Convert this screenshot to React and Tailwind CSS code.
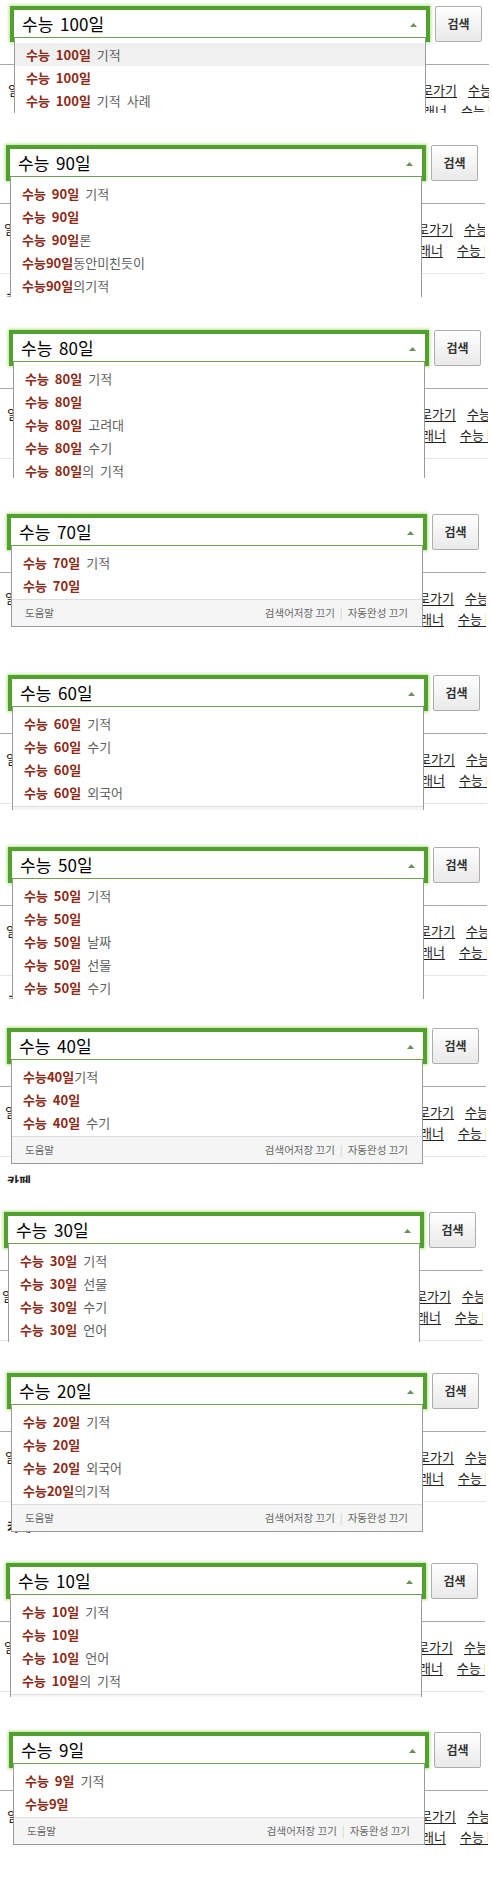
import React from "react";

const panels = [
  {
    q: "100", h: "h-[113px]", w: "w-[489px]", mt: "mt-0", pl: "pl-[10px]", dl: "left-[14px]", hl: 0,
    items: [["수능 100일", "기적", true], ["수능 100일", "", false], ["수능 100일", "기적 사례", true]],
  },
  {
    q: "90", h: "h-[158px]", w: "w-[485px]", mt: "mt-[26px]", pl: "pl-[6px]", dl: "left-[10px]", hl: -1,
    items: [["수능 90일", "기적", true], ["수능 90일", "", false], ["수능 90일", "론", false], ["수능90일", "동안미친듯이", false], ["수능90일", "의기적", false]],
  },
  {
    q: "80", h: "h-[154px]", w: "w-[488px]", mt: "mt-[27px]", pl: "pl-[9px]", dl: "left-[13px]", hl: -1,
    items: [["수능 80일", "기적", true], ["수능 80일", "", false], ["수능 80일", "고려대", true], ["수능 80일", "수기", true], ["수능 80일", "의 기적", false]],
  },
  {
    q: "70", h: "h-[124px]", w: "w-[486px]", mt: "mt-[30px]", pl: "pl-[7px]", dl: "left-[11px]", hl: -1,
    items: [["수능 70일", "기적", true], ["수능 70일", "", false]],
  },
  {
    q: "60", h: "h-[141px]", w: "w-[487px]", mt: "mt-[37px]", pl: "pl-[8px]", dl: "left-[12px]", hl: -1,
    items: [["수능 60일", "기적", true], ["수능 60일", "수기", true], ["수능 60일", "", false], ["수능 60일", "외국어", true]],
  },
  {
    q: "50", h: "h-[158px]", w: "w-[487px]", mt: "mt-[31px]", pl: "pl-[8px]", dl: "left-[12px]", hl: -1,
    items: [["수능 50일", "기적", true], ["수능 50일", "", false], ["수능 50일", "날짜", true], ["수능 50일", "선물", true], ["수능 50일", "수기", true]],
  },
  {
    q: "40", h: "h-[161px]", w: "w-[486px]", mt: "mt-[23px]", pl: "pl-[7px]", dl: "left-[11px]", hl: -1,
    items: [["수능40일", "기적", false], ["수능 40일", "", false], ["수능 40일", "수기", true]],
  },
  {
    q: "30", h: "h-[136px]", w: "w-[483px]", mt: "mt-[23px]", pl: "pl-[4px]", dl: "left-[8px]", hl: -1,
    items: [["수능 30일", "기적", true], ["수능 30일", "선물", true], ["수능 30일", "수기", true], ["수능 30일", "언어", true]],
  },
  {
    q: "20", h: "h-[166px]", w: "w-[486px]", mt: "mt-[25px]", pl: "pl-[7px]", dl: "left-[11px]", hl: -1,
    items: [["수능 20일", "기적", true], ["수능 20일", "", false], ["수능 20일", "외국어", true], ["수능20일", "의기적", false]],
  },
  {
    q: "10", h: "h-[140px]", w: "w-[485px]", mt: "mt-[24px]", pl: "pl-[6px]", dl: "left-[10px]", hl: -1,
    items: [["수능 10일", "기적", true], ["수능 10일", "", false], ["수능 10일", "언어", true], ["수능 10일", "의 기적", false]],
  },
  {
    q: "9", h: "h-[124px]", w: "w-[488px]", mt: "mt-[29px]", pl: "pl-[9px]", dl: "left-[13px]", hl: -1,
    items: [["수능 9일", "기적", true], ["수능9일", "", false]],
  },
];

function Panel({ p }) {
  return (
    <div className={`relative shrink-0 overflow-hidden ${p.h} ${p.w} ${p.mt}`}>
      {/* search bar */}
      <div className={`flex gap-[5px] pt-[6px] ${p.pl}`}>
        <div className="h-[36px] w-[420px] shrink-0 border-4 border-[#52a02e] bg-white shadow-[0_0_3px_1px_#b6e190]">
          <div className="flex h-[28px] items-center border-b border-[#6f9e55] pl-[8px] pr-[9px]">
            <span className="text-[17px] leading-none text-black [word-spacing:3px]">수능 {p.q}일</span>
            <svg className="ml-auto mt-[2px]" width="7" height="4" viewBox="0 0 7 4">
              <polygon points="0,4 3.5,0 7,4" fill="#6b9256" />
            </svg>
          </div>
        </div>
        <div className="flex h-[36px] w-[47px] shrink-0 items-center justify-center rounded-[2px] border border-[#adadad] bg-gradient-to-b from-white to-[#e9e9e9] text-[12px] font-bold text-[#333]">
          검색
        </div>
      </div>

      {/* page content behind the dropdown */}
      <div className="mt-[22px] h-px bg-[#a8a8a8]" />
      <div className={`mt-[14px] ${p.pl}`}>
        <div className="-ml-[2px] flex h-[21px] items-center whitespace-nowrap text-[13px] text-[#222]">
          <div className="flex w-[449px] shrink-0 justify-between">
            <span>일</span>
            <span className="underline underline-offset-2">바로가기</span>
          </div>
          <span className="ml-[11px] shrink-0 underline underline-offset-2">수능 시간표</span>
        </div>
        <div className="-ml-[2px] flex h-[21px] items-center whitespace-nowrap text-[13px] text-[#222]">
          <div className="flex w-[439px] shrink-0 justify-end">
            <span className="underline underline-offset-2">스터디 플래너</span>
          </div>
          <span className="ml-[14px] shrink-0 underline underline-offset-2">수능 D-day</span>
        </div>
      </div>
      <div className="mt-[13px] h-px bg-[#e6e6e6]" />
      <div className={`mt-[16px] text-[13px] font-bold leading-[16px] text-[#222] ${p.pl}`}>카페</div>

      {/* autocomplete dropdown */}
      <div className={`absolute top-[38px] z-10 w-[412px] border-x border-b border-[#9b9b9b] bg-white ${p.dl}`}>
        <div className="pb-[2px] pt-[5px]">
          {p.items.map((it, i) => (
            <div
              key={i}
              className={`flex h-[23px] items-center whitespace-nowrap pl-[11px] text-[13px] [word-spacing:3px] ${i === p.hl ? "bg-[#f0f0f0]" : ""}`}
            >
              <span className="font-bold text-[#8b2b19]">{it[0]}</span>
              {it[1] ? (
                <span className={`text-[#5f5f5f] ${it[2] ? "ml-[6px]" : ""}`}>{it[1]}</span>
              ) : null}
            </div>
          ))}
        </div>
        <div className="flex h-[27px] items-center justify-between border-t border-[#dedede] bg-[#f5f5f5] pl-[13px] pr-[14px] text-[10.5px] text-[#666]">
          <span>도움말</span>
          <span>
            검색어저장 끄기<span className="mx-[5px] text-[#cfcfcf]">|</span>자동완성 끄기
          </span>
        </div>
      </div>
    </div>
  );
}

export default function App() {
  return (
    <div
      className="flex min-h-[1895px] w-[492px] flex-col overflow-hidden bg-white"
      style={{ fontFamily: "'Noto Sans CJK KR', 'Noto Sans', sans-serif" }}
    >
      {panels.map((p, i) => (
        <Panel key={i} p={p} />
      ))}
    </div>
  );
}
